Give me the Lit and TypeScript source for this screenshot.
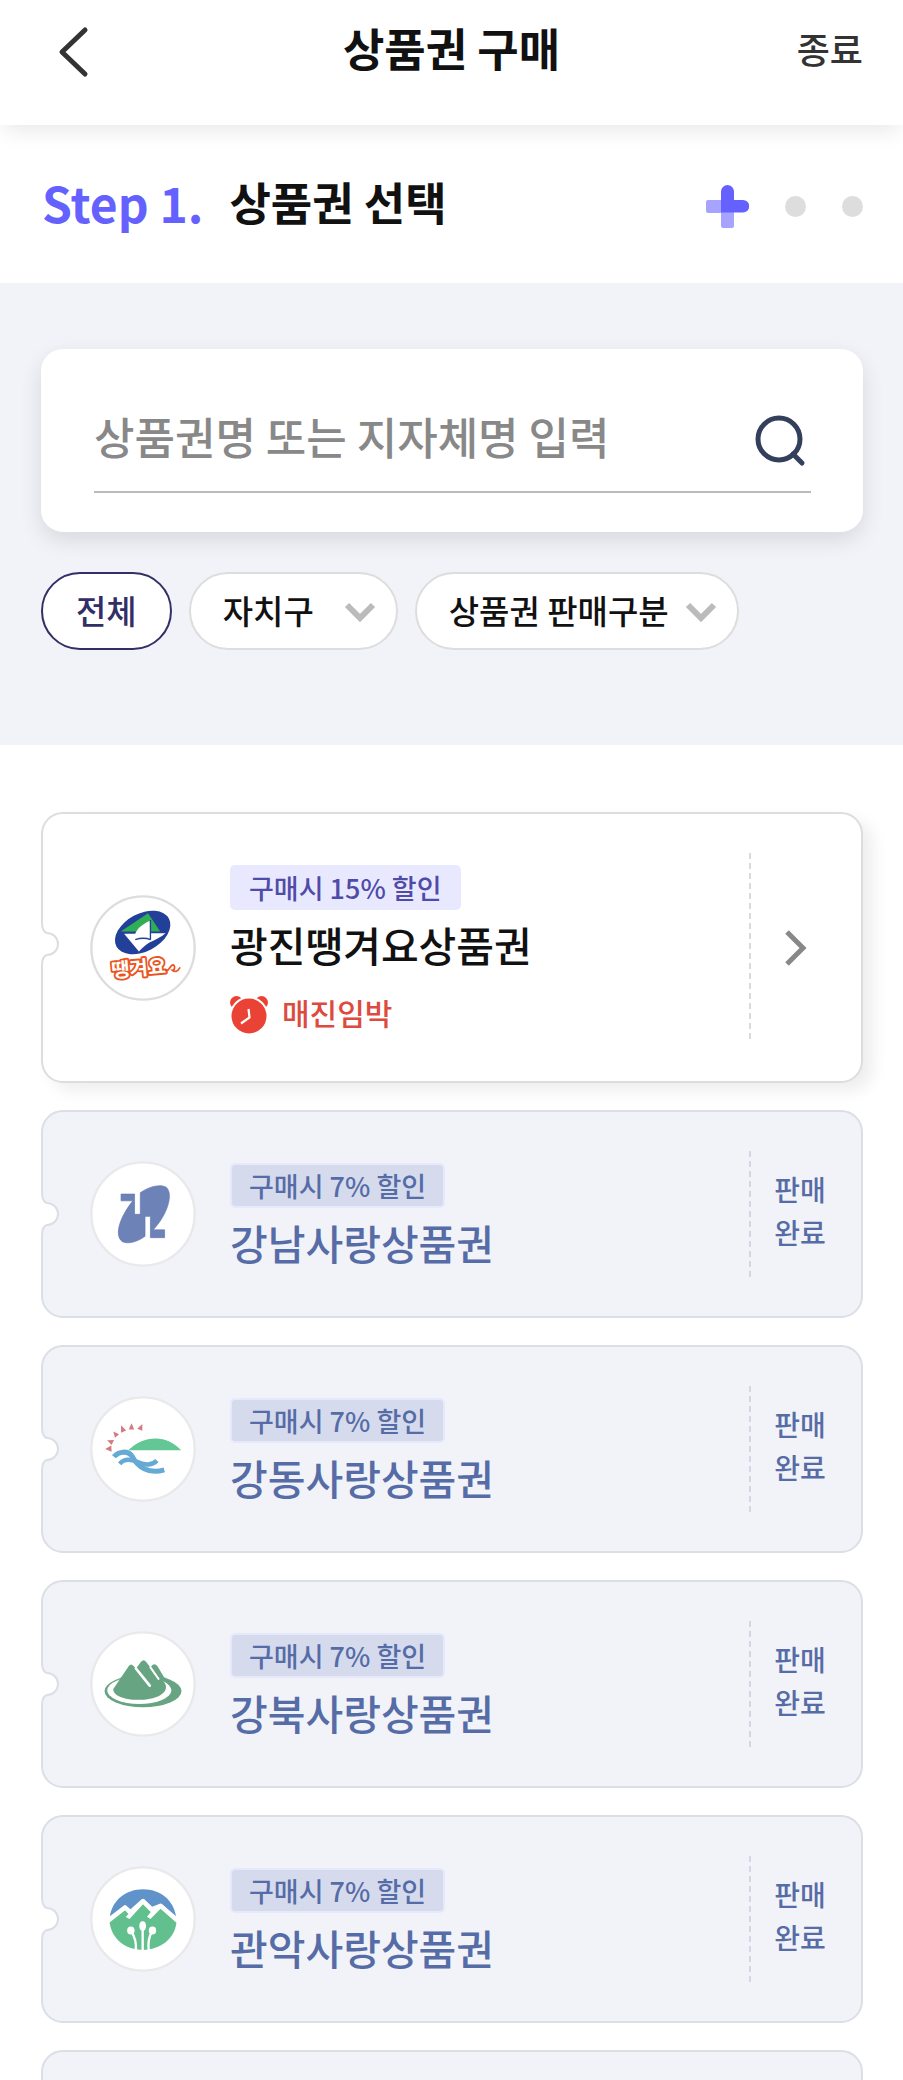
import { LitElement, html, svg, css, nothing, SVGTemplateResult } from "lit";
import { customElement, property } from "lit/decorators.js";

interface Voucher {
  name: string;
  rate: number;
  logo: string;
  soldOut: boolean;
}

const VOUCHERS: Voucher[] = [
  { name: "광진땡겨요상품권", rate: 15, logo: "gwangjin", soldOut: false },
  { name: "강남사랑상품권", rate: 7, logo: "gangnam", soldOut: true },
  { name: "강동사랑상품권", rate: 7, logo: "gangdong", soldOut: true },
  { name: "강북사랑상품권", rate: 7, logo: "gangbuk", soldOut: true },
  { name: "관악사랑상품권", rate: 7, logo: "gwanak", soldOut: true },
];

const LOGOS: Record<string, { box: string; art: SVGTemplateResult }> = {
  gwangjin: {
    box: "32 42 314 314",
    art: svg`
      <ellipse cx="188" cy="153" rx="88" ry="56" transform="rotate(-28 188 153)" fill="#22409a" />
      <path d="M204 96 L123 150 H240 Z" fill="#2fae54" />
      <path d="M209 118 C188 128 172 140 166 157 H133 L177 209 C186 200 196 190 208 183 C226 175 242 166 256 155 H213 Z" fill="#fff" />
      <path d="M211 116 V174" stroke="#22409a" stroke-width="4" fill="none" />
      <path d="M166 174 Q190 166 212 174" stroke="#22409a" stroke-width="4" fill="none" />
      <text x="97" y="287" transform="rotate(-5 97 287)" font-size="59" font-weight="700"
        font-family="'Noto Sans CJK KR', sans-serif" fill="#fff" stroke="#e95420" stroke-width="11"
        stroke-linejoin="round" paint-order="stroke">땡겨요</text>
      <path d="M256 266 C266 270 270 250 277 249 C285 249 284 265 276 265 C284 272 292 268 298 258"
        stroke="#e95420" stroke-width="5" fill="none" stroke-linecap="round" />`,
  },
  gangnam: {
    box: "211 210 314 314",
    art: svg`<path fill="#6d83b8" stroke="#5f78b1" stroke-width="2"
      d="M303 308 H343 V368 H360 V304 C385 286 420 277 437 288 C459 308 440 370 398 414 H432 V437 H390 V374 H374 V433 C350 450 325 457 307 449 C281 430 300 375 338 328 H303 Z" />`,
  },
  gangdong: {
    box: "32 45 314 314",
    art: svg`
      <g fill="#d4797f">
        <path d="M77 202 L95 192 L96 210 Z" />
        <path d="M83 176 L103 175 L96 190 Z" />
        <path d="M101 150 L118 158 L106 169 Z" />
        <path d="M124 132 L139 147 L124 154 Z" />
        <path d="M155 126 L163 144 H147 Z" />
        <path d="M187 128 V148 L172 142 Z" />
      </g>
      <path d="M145 206 C168 184 196 171 226 171 C256 171 280 183 302 206 Z" fill="#62c795" />
      <path d="M103 225 C117 208 145 206 157 224 C172 254 205 278 252 264" stroke="#65a9d4" stroke-width="15" fill="none" />
      <path d="M120 246 C134 229 153 232 171 240 C195 252 218 250 230 236" stroke="#65a9d4" stroke-width="13" fill="none" />`,
  },
  gangbuk: {
    box: "32 60 314 314",
    art: svg`
      <ellipse cx="189" cy="238" rx="114" ry="48" fill="#67a482" />
      <ellipse cx="178" cy="236" rx="95" ry="40" fill="#fff" />
      <path d="M101 232 L147 164 Q154 155 161 164 L168 172 L183 151 Q191 142 198 151 L211 168 L217 161 Q224 155 231 163 L252 198 L248 208 C261 219 262 238 240 250 C205 270 138 267 112 250 Q100 243 101 232 Z" fill="#67a482" />
      <path d="M168 171 L209 222" stroke="#fff" stroke-width="8" stroke-linecap="round" />
      <path d="M211 168 L235 202" stroke="#fff" stroke-width="6" stroke-linecap="round" />`,
  },
  gwanak: {
    box: "32 45 314 314",
    art: svg`
      <path d="M91 195 C98 146 139 114 189 114 C240 114 280 146 287 195 L243 157 L215 172 L189 143 L152 180 L136 165 Z" fill="#5f93c9" />
      <path d="M90 212 L136 176 L146 187 L138 196 L149 202 L189 158 L212 181 L201 195 L211 202 L241 172 L288 213 C282 262 240 293 189 293 C138 293 97 262 90 212 Z" fill="#62c08e" />
      <path d="M88 204 L136 167 L152 181 L189 148 L215 173 L241 162 L290 204" stroke="#fff" stroke-width="12" fill="none" stroke-linejoin="round" />
      <g fill="none" stroke="#fff" stroke-width="7">
        <path d="M155 240 Q170 262 168 295" />
        <path d="M188 228 V295" />
        <path d="M215 240 Q202 262 206 295" />
      </g>
      <g fill="#fff">
        <ellipse cx="153" cy="236" rx="11" ry="12" />
        <ellipse cx="188" cy="223" rx="10" ry="14" />
        <ellipse cx="217" cy="236" rx="11" ry="12" />
      </g>`,
  },
};

@customElement("voucher-card")
class VoucherCard extends LitElement {
  @property({ attribute: false }) voucher?: Voucher;

  static styles = css`
    :host {
      display: block;
    }
    .card {
      position: relative;
      display: flex;
      min-height: 204px;
      border: 2px solid #dddddd;
      border-radius: 22px;
      background: #fff;
      color: #111;
      text-decoration: none;
      box-shadow: 10px 8px 16px rgba(0, 0, 0, 0.07);
    }
    .sold {
      background: #f2f3f8;
      border-color: #dcdee6;
      color: #566ca6;
      box-shadow: none;
    }
    .notch {
      position: absolute;
      left: -3px;
      top: 50%;
      width: 20px;
      height: 48px;
      margin-top: -28px;
    }
    .sold .notch {
      margin-top: -24px;
    }
    .logo {
      flex: none;
      align-self: center;
      width: 106px;
      height: 106px;
      margin: 0 34px 0 47px;
    }
    .info {
      flex: 1;
      min-width: 0;
      padding: 51px 0 46px;
    }
    .badge {
      display: block;
      width: fit-content;
      box-sizing: border-box;
      padding: 0 19px;
      border-radius: 5px;
      font-size: 27px;
      line-height: 45px;
      font-weight: 500;
      background: #e8e9ff;
      color: #504ba8;
    }
    .sold .badge {
      border: 2px solid #e6e9fb;
      padding: 0 17px;
      line-height: 41px;
      background: #d5dbed;
      color: #566ca6;
    }
    .name {
      margin: 6px 0 0;
      font-size: 41px;
      line-height: 56px;
      font-weight: 500;
    }
    .status {
      display: flex;
      align-items: center;
      gap: 14px;
      margin: 18px 0 0;
      font-size: 30px;
      line-height: 45px;
      font-weight: 500;
      color: #dd4a3e;
    }
    .clock {
      width: 38px;
      height: 38px;
      margin-top: 4px;
    }
    .divider {
      flex: none;
      width: 2px;
      margin: 39px 0;
      background: repeating-linear-gradient(#dadada 0 6px, transparent 6px 10px);
    }
    .sold .divider {
      background: repeating-linear-gradient(#d2d7e4 0 6px, transparent 6px 10px);
    }
    .side {
      flex: none;
      box-sizing: border-box;
      width: 110px;
      padding-right: 20px;
      display: flex;
      align-items: center;
      justify-content: center;
      font-size: 28px;
      line-height: 43px;
      font-weight: 500;
      text-align: center;
    }
    .sold .side {
      padding: 0 12px 7px 0;
    }
    .go {
      width: 24px;
      height: 38px;
    }
  `;

  private notch(border: string) {
    return html`<svg class="notch" viewBox="0 0 20 48" aria-hidden="true">
      <path d="M0 0 H2 V2 Q2 12 7 13 A11 11 0 0 1 7 35 Q2 36 2 46 V48 H0 Z" fill="#fff" />
      <path d="M2 0 V2 Q2 12 7 13 A11 11 0 0 1 7 35 Q2 36 2 46 V48" fill="none" stroke=${border} stroke-width="2" />
    </svg>`;
  }

  render() {
    const v = this.voucher;
    if (!v) return html`<div class="card sold"></div>`;
    const logo = LOGOS[v.logo];
    const [bx, by] = logo.box.split(" ").map(Number);
    const body = html`
      ${this.notch(v.soldOut ? "#dcdee6" : "#dddddd")}
      <svg class="logo" viewBox=${logo.box} aria-hidden="true">
        <circle cx=${bx + 157} cy=${by + 157} r="153" fill="#fff" stroke=${v.soldOut ? "#e9e9eb" : "#dddddd"} stroke-width="7" />
        ${logo.art}
      </svg>
      <div class="info">
        <span class="badge">구매시 ${v.rate}% 할인</span>
        <h2 class="name">${v.name}</h2>
        ${v.soldOut
          ? nothing
          : html`<p class="status">
              <svg class="clock" viewBox="0 0 38 38" aria-hidden="true">
                <g fill="#ea4335">
                  <circle cx="6.5" cy="6.5" r="6.5" />
                  <circle cx="31.5" cy="6.5" r="6.5" />
                  <circle cx="19" cy="20" r="18.5" stroke="#fff" stroke-width="2" />
                </g>
                <path d="M18.5 13 L19.5 21.5 L11 27.5" fill="none" stroke="#fff" stroke-width="2.2" />
              </svg>
              매진임박
            </p>`}
      </div>
      <span class="divider"></span>
      <span class="side">
        ${v.soldOut
          ? html`판매<br />완료`
          : html`<svg class="go" viewBox="0 0 24 38" aria-hidden="true">
              <path d="M3 3 L19 19 L3 35" fill="none" stroke="#888" stroke-width="5" />
            </svg>`}
      </span>
    `;
    return v.soldOut
      ? html`<article class="card sold">${body}</article>`
      : html`<a class="card" href="#voucher">${body}</a>`;
  }
}

@customElement("app-root")
class AppRoot extends LitElement {
  static styles = css`
    :host {
      display: block;
      height: 100vh;
      overflow: hidden;
      background: #fff;
      color: #111;
      font-family: "Noto Sans CJK KR", sans-serif;
    }
    button,
    input,
    select {
      font: inherit;
      color: inherit;
      border: 0;
      padding: 0;
      margin: 0;
      background: none;
    }
    h1,
    h2 {
      margin: 0;
      font-size: 45px;
      line-height: 60px;
      font-weight: 700;
    }
    .bar {
      display: grid;
      grid-template-columns: 1fr auto 1fr;
      align-items: center;
      box-sizing: border-box;
      height: 125px;
      padding: 0 40px 30px;
      box-shadow: 0 10px 20px -4px rgba(0, 0, 0, 0.09);
    }
    .back {
      justify-self: start;
      display: flex;
      padding: 12px 18px 4px;
    }
    .back svg {
      width: 32px;
      height: 52px;
    }
    .close {
      justify-self: end;
      font-size: 36px;
      line-height: 52px;
      font-weight: 500;
      color: #333;
    }
    .step {
      display: flex;
      align-items: center;
      justify-content: space-between;
      box-sizing: border-box;
      height: 158px;
      padding: 4px 40px 0 42px;
    }
    .heading {
      display: flex;
      align-items: center;
      gap: 26px;
      padding-bottom: 8px;
    }
    .count {
      font-size: 48px;
      line-height: 60px;
      font-weight: 700;
      color: #6461ff;
    }
    .dots {
      display: flex;
      align-items: center;
      gap: 36px;
    }
    .plus {
      width: 43px;
      height: 43px;
    }
    .dot {
      width: 21px;
      height: 21px;
      border-radius: 50%;
      background: #dddddd;
    }
    .finder {
      padding: 66px 40px 95px 41px;
      background: #f2f3f8;
    }
    .search {
      padding: 54px 52px 39px 53px;
      border-radius: 22px;
      background: #fff;
      box-shadow: 0 8px 22px rgba(0, 0, 0, 0.11);
    }
    .field {
      display: flex;
      align-items: center;
      justify-content: space-between;
      height: 88px;
      border-bottom: 2px solid #bbbbbb;
    }
    .field input {
      flex: 1;
      min-width: 0;
      height: 64px;
      margin-bottom: 22px;
      font-size: 44px;
      font-weight: 500;
      outline: 0;
    }
    .field input::placeholder {
      color: #888;
      opacity: 1;
    }
    .find {
      display: flex;
      padding: 0 4px 12px;
    }
    .find svg {
      width: 52px;
      height: 52px;
    }
    .filters {
      display: flex;
      flex-wrap: wrap;
      gap: 17px;
      margin-top: 40px;
      font-size: 33px;
      font-weight: 500;
    }
    .pill {
      display: flex;
      align-items: center;
      box-sizing: border-box;
      height: 78px;
      border: 2px solid #dddddd;
      border-radius: 39px;
      background: #fff;
      position: relative;
    }
    .all {
      padding: 0 33px 2px;
      border-color: #322f66;
      color: #322f66;
    }
    .pill select {
      appearance: none;
      height: 74px;
      padding: 0 81px 2px 32px;
      border-radius: 37px;
    }
    .wide select {
      padding-right: 68px;
    }
    .arrow {
      position: absolute;
      right: 20px;
      top: 27px;
      width: 32px;
      height: 22px;
      pointer-events: none;
    }
    .list {
      display: flex;
      flex-direction: column;
      gap: 27px;
      margin: 0;
      padding: 67px 40px 30px 41px;
      list-style: none;
    }
  `;

  private filter(label: string, wide: boolean) {
    return html`<label class="pill ${wide ? "wide" : ""}">
      <select aria-label=${label}>
        <option>${label}</option>
      </select>
      <svg class="arrow" viewBox="0 0 32 22" aria-hidden="true">
        <path d="M3 4 L16 17 L29 4" fill="none" stroke="#bbbbbb" stroke-width="6" />
      </svg>
    </label>`;
  }

  render() {
    return html`
      <header class="bar">
        <button class="back" aria-label="뒤로">
          <svg viewBox="0 0 32 52" aria-hidden="true">
            <path d="M27 4 L4 26 L27 48" fill="none" stroke="#333" stroke-width="5" stroke-linecap="round" stroke-linejoin="round" />
          </svg>
        </button>
        <h1>상품권 구매</h1>
        <button class="close">종료</button>
      </header>
      <main>
        <section class="step">
          <div class="heading">
            <span class="count">Step 1.</span>
            <h2>상품권 선택</h2>
          </div>
          <div class="dots">
            <svg class="plus" viewBox="0 0 43 43" aria-hidden="true">
              <path d="M0 17 Q0 15 2 15 H16 V28 H2 Q0 28 0 26 Z M15 27 H28 V41 Q28 43 26 43 H17 Q15 43 15 41 Z" fill="#a6a4ff" />
              <path d="M15 27.5 V6.5 A6.5 6.5 0 0 1 28 6.5 V15 H37 A6.2 6.2 0 0 1 37 27.5 Z" fill="#6461ff" />
            </svg>
            <span class="dot"></span>
            <span class="dot"></span>
          </div>
        </section>
        <section class="finder">
          <form class="search" role="search">
            <div class="field">
              <input type="text" aria-label="상품권 검색" placeholder="상품권명 또는 지자체명 입력" />
              <button class="find" type="button" aria-label="검색">
                <svg viewBox="0 0 52 52" aria-hidden="true">
                  <circle cx="24" cy="24" r="21" fill="none" stroke="#343f5c" stroke-width="5" />
                  <path d="M38 39 L47 48" stroke="#343f5c" stroke-width="5" stroke-linecap="round" />
                </svg>
              </button>
            </div>
          </form>
          <div class="filters">
            <button class="pill all">전체</button>
            ${this.filter("자치구", false)} ${this.filter("상품권 판매구분", true)}
          </div>
        </section>
        <ul class="list">
          ${VOUCHERS.map((v) => html`<li><voucher-card .voucher=${v}></voucher-card></li>`)}
          <li><voucher-card></voucher-card></li>
        </ul>
      </main>
    `;
  }
}
